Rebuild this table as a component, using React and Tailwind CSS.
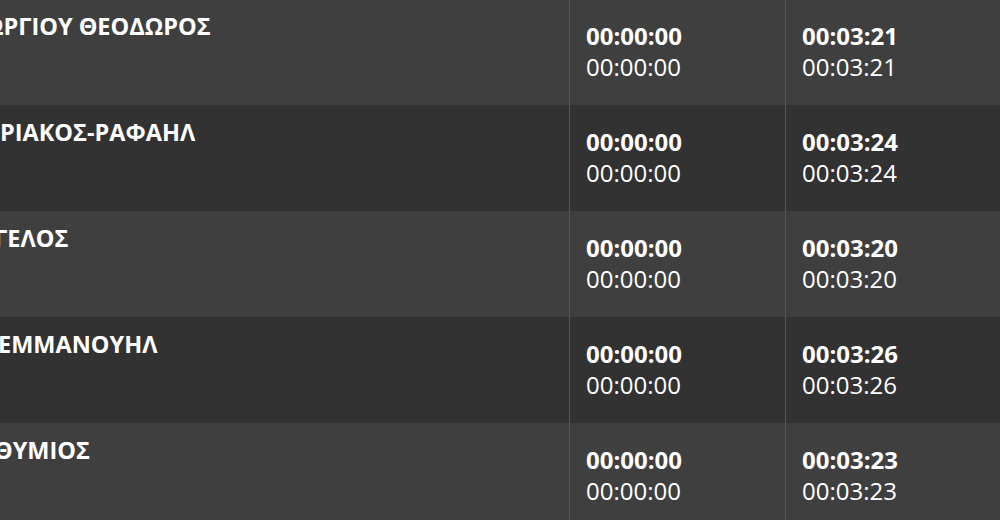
import React from "react";

const rows = [
  { name: "ΩΡΓΙΟΥ ΘΕΟΔΩΡΟΣ", ml: "-ml-[15px]", a: "00:00:00", b: "00:03:21", bg: "bg-[#3f3f3f]" },
  { name: "ΡΙΑΚΟΣ-ΡΑΦΑΗΛ", ml: "ml-0", a: "00:00:00", b: "00:03:24", bg: "bg-[#323232]" },
  { name: "ΓΓΕΛΟΣ", ml: "-ml-[19px]", a: "00:00:00", b: "00:03:20", bg: "bg-[#3f3f3f]" },
  { name: "ΕΜΜΑΝΟΥΗΛ", ml: "-ml-[2px]", a: "00:00:00", b: "00:03:26", bg: "bg-[#323232]" },
  { name: "ΘΥΜΙΟΣ", ml: "-ml-[6px]", a: "00:00:00", b: "00:03:23", bg: "bg-[#3f3f3f]" },
];

function TimeCell({ v }) {
  return (
    <div className="w-[216px] shrink-0 border-r border-[#565656] pl-[16px] pt-[21px] text-[24px] leading-[31px] text-white">
      <div className="font-bold">{v}</div>
      <div>{v}</div>
    </div>
  );
}

export default function App() {
  return (
    <div
      className="w-[1000px] h-[520px] overflow-hidden bg-[#3f3f3f]"
      style={{ fontFamily: '"Open Sans", "Noto Sans", sans-serif' }}
    >
      <div className="-mt-[1px] w-[1004px]">
        {rows.map((r, i) => (
          <div key={i} className={`flex h-[106px] ${r.bg}`}>
            <div className="w-[570px] shrink-0 overflow-hidden border-r border-[#565656] pt-[13px]">
              <div className={`whitespace-nowrap text-[23.5px] leading-[28px] font-bold text-white ${r.ml}`}>
                {r.name}
              </div>
            </div>
            <TimeCell v={r.a} />
            <TimeCell v={r.b} />
          </div>
        ))}
      </div>
    </div>
  );
}
